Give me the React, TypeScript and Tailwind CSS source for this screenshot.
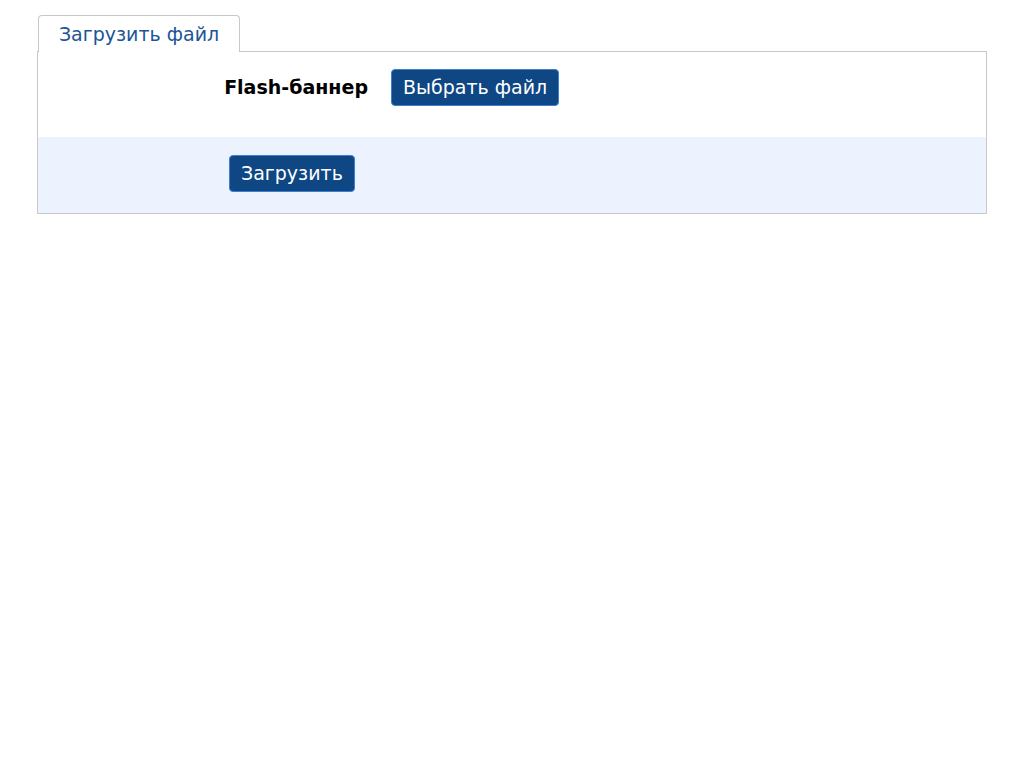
const font = { fontFamily: '"DejaVu Sans", "Liberation Sans", sans-serif' };

function App() {
    return (
        <main className="min-h-screen bg-white pt-[15px] px-[37px]" style={font}>
            <div className="w-[950px]">
                <div className="flex">
                    <div className="ml-px -mb-px w-[202px] h-[37px] border border-b-0 border-[#c8c8c8] rounded-t-[4px] bg-white flex items-center justify-center text-[19px] text-[#1c5597] relative z-10">
                        Загрузить файл
                    </div>
                </div>
                <section className="border border-[#c8c8c8]">
                    <div className="h-[85px] flex items-start pt-[17px]">
                        <label className="w-[330px] h-[37px] flex items-center justify-end font-bold text-[19px] text-black">Flash-баннер</label>
                        <button className="ml-[23px] h-[37px] px-[11px] rounded-[4px] border border-[#3c7fd2] bg-[#0e4784] text-white text-[19px]">
                            Выбрать файл
                        </button>
                    </div>
                    <div className="h-[76px] bg-[#ecf3fe] flex items-start pt-[18px] pl-[191px]">
                        <button className="h-[37px] px-[11px] rounded-[4px] border border-[#3c7fd2] bg-[#0e4784] text-white text-[19px]">
                            Загрузить
                        </button>
                    </div>
                </section>
            </div>
        </main>
    );
}

export default App;
